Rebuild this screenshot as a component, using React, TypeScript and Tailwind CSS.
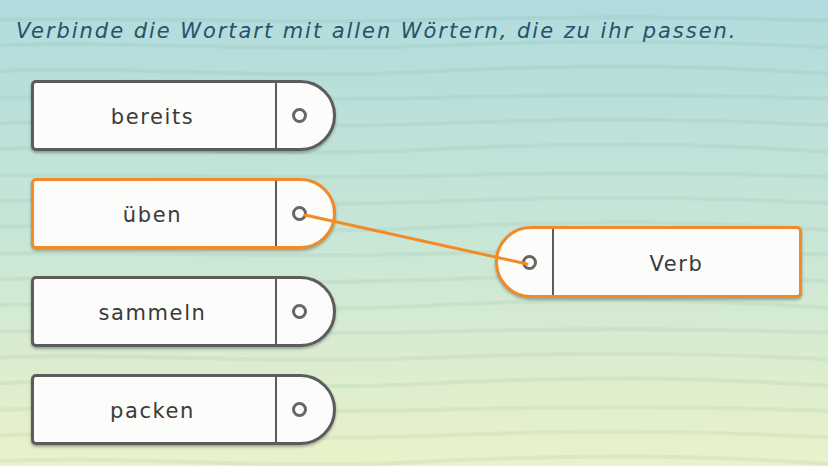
import React from 'react';

const words = ['bereits', 'üben', 'sammeln', 'packen'];

const waves = Array.from({ length: 18 }, (_, i) => {
  const y = 20 + i * 26;
  const a = 4 + (i % 3) * 2;
  return `M -20 ${y} C 120 ${y - a}, 260 ${y + a}, 420 ${y} S 700 ${y - a}, 860 ${y + a / 2}`;
});

function WordCard({ word, active }: { word: string; active?: boolean }) {
  const border = active ? 'border-[#f28a26]' : 'border-[#5c5c5c]';
  return (
    <div
      className={`flex h-[71px] w-[305px] rounded-l-[5px] rounded-r-[36px] border-[3px] ${border} bg-[#fcfcfa] shadow-[0_2px_3px_rgba(0,0,0,0.3)]`}
    >
      <div className="flex flex-1 items-center justify-center border-r-2 border-[#5c5c5c] pr-[4px] pt-[5px] text-[21px] tracking-[1.6px] text-[#3a3a3a]">
        {word}
      </div>
      <div className="flex w-[56px] items-center pl-[15px]">
        <div className="h-[15px] w-[15px] rounded-full border-[3px] border-[#666]" />
      </div>
    </div>
  );
}

export default function App() {
  return (
    <div
      className="relative h-[466px] w-[828px] overflow-hidden bg-gradient-to-b from-[#b1dbdd] via-[#c8e6d6] to-[#eaf2c9]"
      style={{ fontFamily: '"DejaVu Sans", Verdana, sans-serif' }}
    >
      <svg className="absolute inset-0" width="828" height="466">
        {waves.map((d, i) => (
          <path key={i} d={d} fill="none" stroke="rgba(70,140,130,0.08)" strokeWidth="4" />
        ))}
      </svg>

      <div className="relative">
        <p className="pl-[16px] pt-[16px] text-[21px] italic tracking-[1.95px] text-[#24536a]">
          Verbinde die Wortart mit allen Wörtern, die zu ihr passen.
        </p>

        <div className="mt-[32px] flex items-center pl-[31px]">
          <div className="flex flex-col gap-[27px]">
            {words.map((w) => (
              <WordCard key={w} word={w} active={w === 'üben'} />
            ))}
          </div>

          <div className="ml-[159px] flex h-[72px] w-[307px] rounded-l-[36px] rounded-r-[5px] border-[3px] border-[#f28a26] bg-[#fcfcfa] shadow-[0_2px_3px_rgba(0,0,0,0.3)]">
            <div className="flex w-[56px] items-center justify-end border-r-2 border-[#5c5c5c] pr-[15px]">
              <div className="h-[15px] w-[15px] rounded-full border-[3px] border-[#666]" />
            </div>
            <div className="flex flex-1 items-center justify-center pt-[5px] text-[21px] tracking-[1.6px] text-[#3a3a3a]">
              Verb
            </div>
          </div>
        </div>
      </div>

      <svg className="pointer-events-none absolute inset-0" width="828" height="466">
        <line x1="305" y1="215" x2="527" y2="264" stroke="#f28a26" strokeWidth="3" strokeLinecap="round" />
      </svg>
    </div>
  );
}
